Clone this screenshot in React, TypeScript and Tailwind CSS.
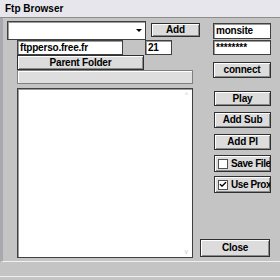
import { Check } from 'lucide-react';

const btn =
  'flex items-center justify-center border border-[#303030] bg-[#dcdcdc] shadow-[inset_1px_1px_0_#ffffff,inset_-1px_-1px_0_#8a8a8a] text-[10px] font-bold text-black leading-none tracking-[-0.2px]';
const field =
  'flex items-center border border-[#404040] bg-white px-[2px] text-[10px] font-bold text-black leading-none tracking-[-0.2px] shadow-[inset_1px_1px_0_#9a9a9a]';

function Btn({ label, className }: { label: string; className: string }) {
  return <div className={`${btn} ${className}`}>{label}</div>;
}

function CheckBtn({ label, checked, className }: { label: string; checked: boolean; className: string }) {
  return (
    <div className={`${btn} ${className} justify-start overflow-hidden whitespace-nowrap pl-[3px] tracking-[-0.4px]`}>
      <span className="mr-[3px] flex h-[10px] w-[10px] shrink-0 items-center justify-center border border-[#505050] bg-white">
        {checked && <Check className="h-[9px] w-[9px] text-black" strokeWidth={4} />}
      </span>
      {label}
    </div>
  );
}

export default function App() {
  return (
    <div
      className="relative h-[280px] w-[280px] overflow-hidden bg-[#c4c4c4]"
      style={{ fontFamily: '"Liberation Sans", Arial, sans-serif' }}
    >
      <div className="flex h-[18px] items-center border-b border-[#8c8c8c] bg-[#e6e6ec] pl-[5px] text-[10px] font-bold text-black">
        Ftp Browser
      </div>
      <div className="flex h-[244px] border-l-[3px] border-[#a8a8b0] border-b border-b-[#f0f0f0]">
        <div className="flex w-[197px] flex-col pl-[4px] pt-[3px]">
          <div className="flex items-start">
            <div className="flex h-[19px] w-[139px] items-center justify-end border border-[#404040] bg-white pr-[3px] shadow-[inset_1px_1px_0_#9a9a9a]">
              <span className="h-0 w-0 border-x-[3px] border-t-[3px] border-x-transparent border-t-black" />
            </div>
            <Btn label="Add" className="ml-[5px] mt-[2px] h-[14px] w-[49px]" />
          </div>
          <div className="flex pl-[10px]">
            <div className={`${field} h-[15px] w-[106px]`}>ftpperso.free.fr</div>
            <div className={`${field} ml-[22px] h-[15px] w-[27px]`}>21</div>
          </div>
          <Btn label="Parent Folder" className="ml-[10px] h-[15px] w-[127px]" />
          <div className="ml-[10px] h-[14px] w-[176px] border border-[#808080] bg-[#dedede] shadow-[inset_1px_1px_0_#ffffff]" />
          <div className="relative ml-[10px] mt-[4px] h-[170px] w-[176px] border border-[#404040] bg-white shadow-[inset_1px_1px_0_#9a9a9a]">
            <span className="absolute right-[4px] top-[2px] text-[7px] leading-none text-[#c8c8c8]">^</span>
            <span className="absolute bottom-[2px] right-[4px] text-[7px] leading-none text-[#c8c8c8]">v</span>
          </div>
        </div>
        <div className="flex flex-1 flex-col pt-[5px]">
          <div className={`${field} ml-[13px] h-[16px] w-[58px]`}>monsite</div>
          <div className={`${field} ml-[13px] mt-[1px] h-[15px] w-[58px] tracking-[0px]`}>********</div>
          <Btn label="connect" className="ml-[13px] mt-[7px] h-[16px] w-[58px]" />
          <Btn label="Play" className="ml-[14px] mt-[13px] h-[15px] w-[57px]" />
          <Btn label="Add Sub" className="ml-[14px] mt-[6px] h-[16px] w-[57px]" />
          <Btn label="Add Pl" className="ml-[14px] mt-[6px] h-[16px] w-[57px]" />
          <CheckBtn label="Save File" checked={false} className="ml-[14px] mt-[5px] h-[17px] w-[57px]" />
          <CheckBtn label="Use Prox" checked className="ml-[14px] mt-[4px] h-[17px] w-[57px]" />
          <Btn label="Close" className="mt-[46px] h-[18px] w-[70px]" />
        </div>
      </div>
      <div className="h-[15px] border-b border-[#f0f0f0]" />
    </div>
  );
}
